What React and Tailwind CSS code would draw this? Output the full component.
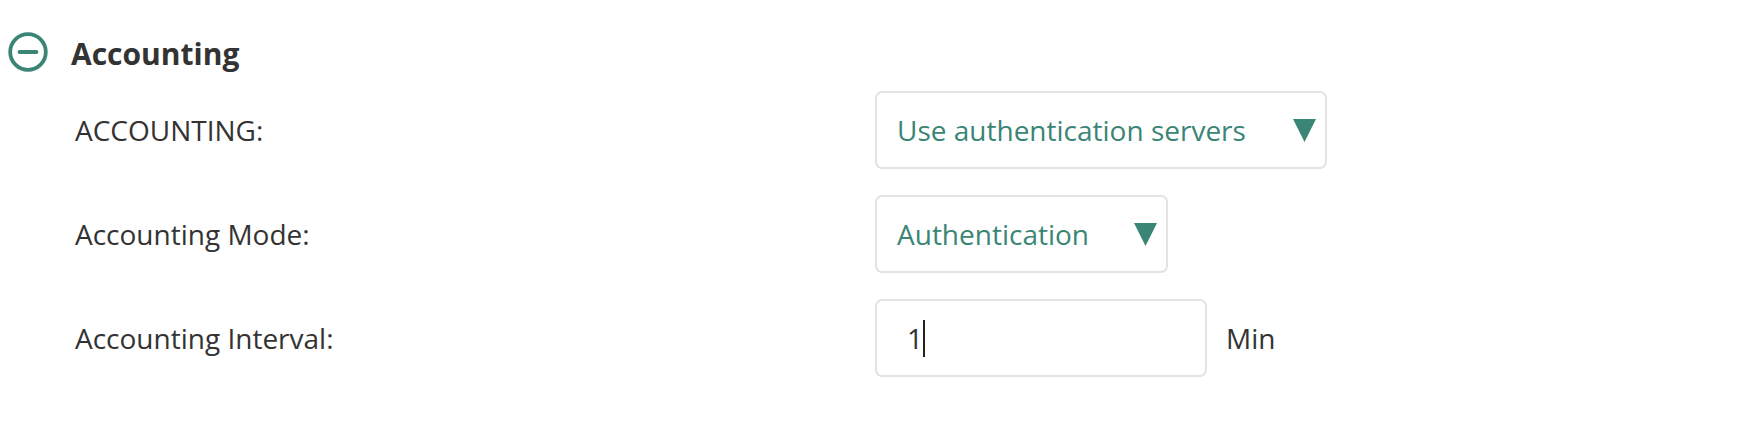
import React from "react";

function Caret() {
  return (
    <svg width="23" height="23" viewBox="0 0 23 23" className="shrink-0">
      <polygon points="0,0 23,0 11.5,23" fill="#3a8575" />
    </svg>
  );
}

export default function App() {
  return (
    <div
      className="w-[1744px] h-[444px] bg-white pl-2 pt-[33px] text-[#333333]"
      style={{ fontFamily: '"Open Sans", "Liberation Sans", sans-serif' }}
    >
      <div className="flex items-center gap-[23px] h-[41px]">
        <svg width="40" height="40" viewBox="0 0 40 40" className="-mt-[3px] shrink-0">
          <circle cx="20" cy="20" r="17.8" fill="none" stroke="#3a8575" strokeWidth="3.8" />
          <line x1="11.5" y1="20" x2="28.5" y2="20" stroke="#3a8575" strokeWidth="3.8" strokeLinecap="round" />
        </svg>
        <h2 className="text-[30px] font-bold leading-[41px]">Accounting</h2>
      </div>

      <div className="mt-[17px] pl-[67px] flex flex-col gap-[26px]">
        <div className="flex items-center h-[78px]">
          <div className="w-[800px] text-[28px]">ACCOUNTING:</div>
          <div className="w-[452px] h-[78px] border-2 border-[#e3e3e3] rounded-[7px] flex items-center justify-between pl-5 pr-[9px]">
            <span className="text-[28px] text-[#3a8575]">Use authentication servers</span>
            <Caret />
          </div>
        </div>

        <div className="flex items-center h-[78px]">
          <div className="w-[800px] text-[28px]">Accounting Mode:</div>
          <div className="w-[293px] h-[78px] border-2 border-[#e3e3e3] rounded-[7px] flex items-center justify-between pl-5 pr-[9px]">
            <span className="text-[28px] text-[#3a8575]">Authentication</span>
            <Caret />
          </div>
        </div>

        <div className="flex items-center h-[78px]">
          <div className="w-[800px] text-[28px]">Accounting Interval:</div>
          <div className="w-[332px] h-[78px] border-2 border-[#e3e3e3] rounded-[7px] flex items-center pl-[30px]">
            <span className="text-[28px] text-[#333333]">1</span>
            <span className="w-[2px] h-[37px] bg-[#222222]" />
          </div>
          <span className="ml-[19px] text-[28px]">Min</span>
        </div>
      </div>
    </div>
  );
}
